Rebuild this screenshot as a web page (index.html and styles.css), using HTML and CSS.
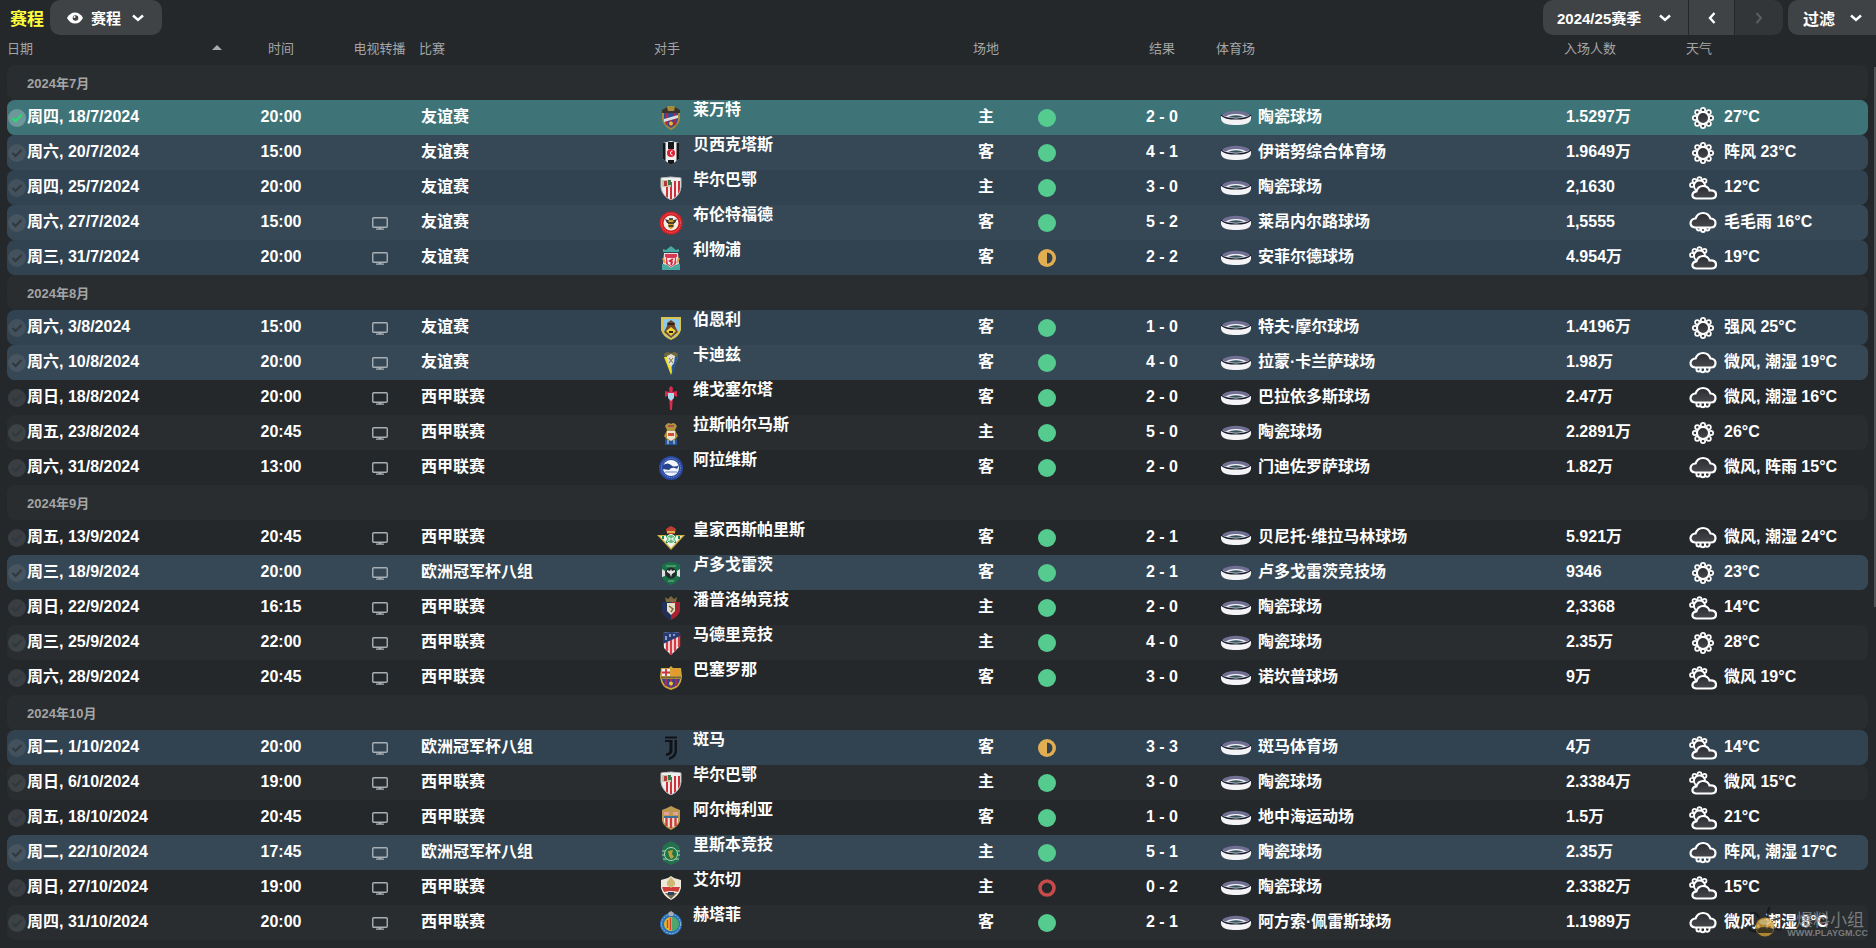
FILE: index.html
```html
<!DOCTYPE html>
<html lang="zh-CN">
<head>
<meta charset="utf-8">
<title>赛程</title>
<link rel="stylesheet" href="styles.css">
</head>
<body>
<svg class="sprite" aria-hidden="true">
  <defs>
    <linearGradient id="sky" x1="0" y1="0" x2="0" y2="1"><stop offset="0" stop-color="#2b2d33"/><stop offset="1" stop-color="#46484c"/></linearGradient>
    <clipPath id="shield"><path d="M2 2Q12 0 22 2V11Q21 20 12 24Q3 20 2 11Z"/></clipPath>
  </defs>
  <symbol id="eye" viewBox="0 0 16 12"><path d="M0 6Q3 0.500 8 0.500T16 6Q13 11.500 8 11.500T0 6Z" fill="#fff"/><circle cx="8.500" cy="6" r="2.800" fill="#404244"/><circle cx="7.500" cy="5" r="1" fill="#fff"/></symbol>
  <symbol id="down" viewBox="0 0 12 8"><path d="M1 1.500L6 6L11 1.500" fill="none" stroke="currentColor" stroke-width="2.400"/></symbol>
  <symbol id="left" viewBox="0 0 8 12"><path d="M6.500 1L2 6L6.500 11" fill="none" stroke="currentColor" stroke-width="2.400"/></symbol>
  <symbol id="right" viewBox="0 0 8 12"><path d="M1.500 1L6 6L1.500 11" fill="none" stroke="currentColor" stroke-width="2"/></symbol>
  <symbol id="check" viewBox="0 0 18 18"><circle cx="9" cy="9" r="9" fill="currentColor" opacity="0.300"/><path class="tick" d="M4.500 9L7.500 12L13.500 6" fill="none" stroke-width="2"/></symbol>
  <symbol id="tv" viewBox="0 0 16 13"><rect x="0.750" y="0.750" width="14.500" height="9.500" rx="1" fill="none" stroke="#a9b0b5" stroke-width="1.400"/><path d="M6.500 10.500H9.500V11.500H12V12.800H4V11.500H6.500Z" fill="#a9b0b5"/></symbol>
  <symbol id="win" viewBox="0 0 18 18"><circle cx="9" cy="9" r="9" fill="#56cb90"/></symbol>
  <symbol id="draw" viewBox="0 0 18 18"><circle cx="9" cy="9" r="9" fill="#e2ae52"/><path d="M9 3.500A5.500 5.500 0 0 1 9 14.500Z" fill="#314150"/></symbol>
  <symbol id="loss" viewBox="0 0 18 18"><circle cx="9" cy="9" r="7" fill="none" stroke="#c64b4b" stroke-width="3.600"/></symbol>
  <symbol id="stadium" viewBox="0 0 32 16"><ellipse cx="16" cy="7" rx="14.500" ry="6.300" fill="#716f94"/><path d="M1 5Q16 11 31 5V9C30 14.500 23 15 16 15S2 14.500 1 9Z" fill="#f4f3f6"/><path d="M6 7C7 3 25 3 26 7Q16 9.500 6 7Z" fill="#eeeef3"/><path d="M8 7Q16 3.500 24 7Q16 8.500 8 7Z" fill="#34525c"/><path d="M1 5Q5 9 16 9T31 5" fill="none" stroke="#171a2b" stroke-width="1.200"/></symbol>
  <symbol id="sun" viewBox="0 0 28 24"><g fill="#3a3b3e" stroke="#fff" stroke-width="1.700"><circle cx="14" cy="4" r="2.200"/><circle cx="19.700" cy="6.300" r="2.200"/><circle cx="22" cy="12" r="2.200"/><circle cx="19.700" cy="17.700" r="2.200"/><circle cx="14" cy="20" r="2.200"/><circle cx="8.300" cy="17.700" r="2.200"/><circle cx="6" cy="12" r="2.200"/><circle cx="8.300" cy="6.300" r="2.200"/></g><circle cx="14" cy="12" r="6" fill="url(#sky)" stroke="#fff" stroke-width="2"/></symbol>
  <symbol id="cloud" viewBox="0 0 28 24"><g fill="#3a3b3e" stroke="#fff" stroke-width="1.700"><circle cx="10.500" cy="3.200" r="2"/><circle cx="15.500" cy="4.800" r="2"/><circle cx="5.500" cy="4.800" r="2"/><circle cx="3" cy="9" r="2"/></g><circle cx="10.500" cy="10" r="5.500" fill="url(#sky)" stroke="#fff" stroke-width="1.800"/><path d="M7 22.500Q3 22 3.500 18.500Q4 15.500 7.500 15.300Q9 10 14 10Q19 10 20.500 14.500Q27 14 27 18.500Q27 22.500 22.500 22.500Z" fill="url(#sky)" stroke="#fff" stroke-width="2.200"/></symbol>
  <symbol id="rain" viewBox="0 0 28 24"><path d="M7.500 15V18.500A2 2 0 0 0 11.500 18.500V15M11.500 17V19.500A2.300 2.300 0 0 0 16 19.500V15M16 17V18.500A2 2 0 0 0 20.500 18.500V15" fill="none" stroke="#fff" stroke-width="2"/><path d="M6 16.500Q1.500 16 1.500 12Q2 8 6.500 7.500Q8.500 2 14 2Q19.500 2 21.500 7.500Q26.500 8 26.500 12Q26.500 16.500 22 16.500Z" fill="url(#sky)" stroke="#fff" stroke-width="2.200"/></symbol>
  <symbol id="drizzle" viewBox="0 0 28 24"><g fill="none" stroke="#fff" stroke-width="1.800"><circle cx="9.500" cy="17.500" r="2"/><circle cx="14" cy="19" r="2"/><circle cx="18.500" cy="17.500" r="2"/></g><path d="M6 16.500Q1.500 16 1.500 12Q2 8 6.500 7.500Q8.500 2 14 2Q19.500 2 21.500 7.500Q26.500 8 26.500 12Q26.500 16.500 22 16.500Z" fill="url(#sky)" stroke="#fff" stroke-width="2.200"/></symbol>

  <symbol id="levante" viewBox="0 0 24 24"><path d="M3 4L7 2L9 0H15L17 2L21 4V13Q20 20 12 24Q4 20 3 13Z" fill="#a58b3a"/><path d="M5 6H19V13Q18 19 12 22Q6 19 5 13Z" fill="#24509b"/><path d="M8 7V19M12 13V21M16 7V19" stroke="#b32746" stroke-width="2.400"/><path d="M3 4L8 1L9 5H15L16 1L21 4V7H3Z" fill="#39342b"/><path d="M5 13L19 9V12L5 16Z" fill="#ddd"/><circle cx="12" cy="17.500" r="2" fill="#e6bd31"/></symbol>
  <symbol id="besiktas" viewBox="0 0 24 24"><path d="M4 2L12 0L20 2V18L12 24L4 18Z" fill="#efefef"/><path d="M4 2H6.500V20L4 18ZM9 1H15V8H9ZM17.500 2H20V18L17.500 20ZM9 19H15V22L12 24L9 22Z" fill="#16171a"/><circle cx="12" cy="12" r="4" fill="#df2035"/><path d="M13.500 10A2 2 0 1 0 13.500 14" stroke="#fff" fill="none"/></symbol>
  <symbol id="bilbao" viewBox="0 0 24 24"><g clip-path="url(#shield)"><path d="M0 0H24V24H0Z" fill="#ececec"/><path d="M8 10V24M12 6V24M16 5V22M20 5V19" stroke="#cf3038" stroke-width="2"/><path d="M3 4H12V11H3Z" fill="#c9c3ac"/><path d="M5 5H8V10H5Z" fill="#b33b3b"/><path d="M9 4H12V9H9Z" fill="#37774c"/></g><path d="M2 2Q12 0 22 2V11Q21 20 12 24Q3 20 2 11Z" fill="none" stroke="#bbb"/><path d="M3 3H21" stroke="#eee" stroke-width="2"/></symbol>
  <symbol id="brentford" viewBox="0 0 24 24"><circle cx="12" cy="12" r="11.500" fill="#d22027"/><circle cx="12" cy="12" r="9.500" fill="none" stroke="#ed777b" stroke-dasharray="1 1"/><circle cx="12" cy="12" r="7.500" fill="#f3eee5"/><path d="M6 8L12 10L18 8L16 12L12 13L8 12Z" fill="#343536"/><ellipse cx="12" cy="13" rx="3" ry="5" fill="#d49b24"/><path d="M9 12H15M9.500 15H14.500M10 8H14" stroke="#252627" stroke-width="1.600"/></symbol>
  <symbol id="liverpool" viewBox="0 0 24 24"><path d="M7 4L12 0L17 4L20 3V6H4V3Z" fill="#47a99f"/><path d="M5 7H19L20 18L12 22L4 18Z" fill="#e6dcdc"/><path d="M6 8H18V11H6ZM7 11H17V18L12 21L7 18Z" fill="#d63950"/><path d="M8 12H16L15 18L12 20L9 18Z" fill="#f3eceb"/><path d="M3 18L8 19L12 22L16 19L21 18V24H3Z" fill="#47a99f"/><path d="M4 12L6 17M20 12L18 17" stroke="#e69c4d" stroke-width="2"/><path d="M14 13L11 15L13 16L12 19" stroke="#cf2b40" stroke-width="2" fill="none"/></symbol>
  <symbol id="burnley" viewBox="0 0 24 24"><path d="M2 1H22V14Q20 21 12 24Q4 21 2 14Z" fill="#dcc44a"/><path d="M4 3H20V14Q18 19 12 22Q6 19 4 14Z" fill="#8accef"/><path d="M8 7L12 4L16 7V10L19 16L12 22L5 16L8 10Z" fill="#724727"/><path d="M7 15L12 11L17 15L12 20Z" fill="#eed13b"/><path d="M9 8H15M10 16H14" stroke="#262321" stroke-width="2"/></symbol>
  <symbol id="cadiz" viewBox="0 0 24 24"><path d="M5 3L8 1L12 2L16 1L19 3L18 7H6Z" fill="#70683d"/><path d="M5 6H19L12 24Z" fill="#f1dd2d"/><path d="M12 6H19L13 23Z" fill="#225698"/><path d="M8 5L12 3L16 5L15 12L12 16L9 12Z" fill="#e1e0d0"/><path d="M10 7L14 12M14 7L10 12" stroke="#79723d"/></symbol>
  <symbol id="celta" viewBox="0 0 24 24"><path d="M10.500 6L10 2L12 0L14 2L13.500 6L18 5V11L14 9L13 24H11L10 9L6 11V5Z" fill="#d92b4c"/><path d="M9 7H15V12L12 15L9 12Z" fill="#a9d8ed"/></symbol>
  <symbol id="palmas" viewBox="0 0 24 24"><path d="M6 5Q9 0 12 3Q15 0 18 5L16 9L19 15L15 20H9L5 15L8 9Z" fill="#ad963e"/><path d="M9 5H15" stroke="#b74c42" stroke-width="2"/><path d="M8 10H16V17L12 20L8 17Z" fill="#ece3d0"/><path d="M9 12H15V15H9Z" fill="#cb5031"/><path d="M6 18L12 20L18 18V24H6Z" fill="#2456a0"/><path d="M9 19V23M15 19V23" stroke="#e9e5da"/></symbol>
  <symbol id="alaves" viewBox="0 0 24 24"><circle cx="12" cy="12" r="12" fill="#2949a2"/><circle cx="12" cy="12" r="9.500" fill="none" stroke="#859ed3" stroke-dasharray="1 1"/><circle cx="12" cy="12" r="8" fill="#f4f5f9"/><path d="M4 9Q9 6 12 9T20 9L18 13Q13 10 10 14L4 13Z" fill="#27458e"/><path d="M6 16H18" stroke="#6685c6"/></symbol>
  <symbol id="betis" viewBox="0 0 28 24"><path d="M9 3L12 1L14 0L16 1L19 3L18 8H10Z" fill="#bf3d32"/><path d="M10 6H18" stroke="#d9b347" stroke-width="2"/><path d="M0 9H28L14 24Z" fill="#d1ae49"/><path d="M3 10H25L14 22Z" fill="#f1f2e8"/><path d="M6 10V13M10 9V17M18 9V17M22 10V13" stroke="#168b4a" stroke-width="2"/><circle cx="14" cy="13" r="4.500" fill="#5fba79" stroke="#fff"/><path d="M12 11V15M16 11V15M12 13H16" stroke="#fff"/></symbol>
  <symbol id="ludogorets" viewBox="0 0 24 24"><path d="M3 4Q12 -2 21 4V16Q19 21 12 24Q5 21 3 16Z" fill="#187247"/><path d="M3 8L6 10V15L3 16ZM21 8L18 10V15L21 16Z" fill="#ddd"/><circle cx="12" cy="12" r="5.500" fill="#202a2b"/><path d="M8 9L11 10L12 8L13 10L16 9V11L13 13L12 16L11 13L8 11Z" fill="#e4e5df"/><path d="M9 20H15M7 5H17" stroke="#8ab28e"/></symbol>
  <symbol id="osasuna" viewBox="0 0 24 24"><path d="M6 1L9 3L12 0L15 3L18 1L17 6H7Z" fill="#7b6940"/><path d="M3 6H21V15Q19 21 12 24Q5 21 3 15Z" fill="#a62132"/><path d="M3 6H12V24Q5 21 3 15Z" fill="#1f315b"/><path d="M8 7H16V15L12 19L8 15Z" fill="#e6dfc4"/><path d="M10 10L14 13L12 16" fill="none" stroke="#7c6a44" stroke-width="1.500"/></symbol>
  <symbol id="atletico" viewBox="0 0 24 24"><path d="M4 2Q12 0 21 2V15L12 24L5 17Z" fill="#f3f3f3"/><path d="M8 11V20M12 7V24M16 5V20M20 3V16" stroke="#d53b43" stroke-width="2.400"/><path d="M4 2Q12 0 21 2V5L4 13Z" fill="#263b76"/><path d="M7 5V9M11 3V6M15 3V5" stroke="#fff"/></symbol>
  <symbol id="barcelona" viewBox="0 0 24 24"><path d="M2 2H10L12 0L14 2H22L23 11Q22 22 12 24Q2 22 1 11Z" fill="#d3a737"/><path d="M3 3H11V10H3Z" fill="#eee"/><path d="M7 3V10M3 6.500H11" stroke="#cd3238" stroke-width="1.800"/><path d="M13 3H21V10H13Z" fill="#e39a31"/><path d="M3 13H21Q20 20 12 22Q4 20 3 13Z" fill="#2e4590"/><path d="M7 13V20M12 13V22M17 13V20" stroke="#a32f58" stroke-width="2.500"/><path d="M2 11.500H22" stroke="#746638" stroke-width="2"/><circle cx="12" cy="17.500" r="2" fill="#e7c63c"/></symbol>
  <symbol id="juve" viewBox="0 0 24 24"><path d="M6 1.500H18M6 5H13" stroke="#101318" stroke-width="1.800"/><path d="M18 4V16Q17 22 10 24V21.500Q15.500 19 15.500 15V4ZM13.500 4V16Q12 19.500 7 20V17.500Q10.500 17 10.500 14V4Z" fill="#101318"/></symbol>
  <symbol id="almeria" viewBox="0 0 24 24"><path d="M3 4L8 2L12 0L16 2L21 4V15Q19 21 12 24Q5 21 3 15Z" fill="#bc9850"/><path d="M5 12H19V16Q17 20 12 22Q7 20 5 16Z" fill="#efe6db"/><path d="M7.500 12V20M12 12V22M16.500 12V20" stroke="#cd3b36" stroke-width="2.400"/><path d="M5 6H10V9H5ZM14 6H19V9H14Z" fill="#e5a19b"/><path d="M5 10H19V12H5Z" fill="#3c719c"/></symbol>
  <symbol id="sporting" viewBox="0 0 24 24"><path d="M8 2L12 0L16 2L20 5L21 12L20 20L12 24L4 20L3 12L4 5Z" fill="#24724d"/><path d="M3 10H21M3 14H21M4 18H20" stroke="#a8cfb9"/><circle cx="12" cy="13" r="6.500" fill="#197746" stroke="#b6d6c5"/><path d="M9 10L14 9L13 13L15 16L12 18L10 15Z" fill="#bf9f39"/></symbol>
  <symbol id="elche" viewBox="0 0 24 24"><path d="M2 4L9 2L12 0L15 2L22 4V12Q20 20 12 24Q4 20 2 12Z" fill="#eee9d8"/><path d="M3 11H21L19 16Q12 14 5 16Z" fill="#cf3b38"/><path d="M8 6L12 1L16 6V9L12 12L8 9Z" fill="#cdb974"/><path d="M6 17H18L12 23Z" fill="#6e6748"/><path d="M9 16H15V19H9Z" fill="#314165"/></symbol>
  <symbol id="getafe" viewBox="0 0 24 24"><circle cx="12" cy="13" r="11" fill="#2971b6"/><circle cx="12" cy="13" r="9.500" fill="none" stroke="#8fc2e8" stroke-dasharray="2 1"/><circle cx="12" cy="13" r="7" fill="#e5b22c"/><path d="M13 6A7 7 0 0 1 13 20Z" fill="#4fa66b"/><path d="M8.500 9V17M11.500 7V19" stroke="#cf4037" stroke-width="1.400"/><path d="M9 2L12 0L15 2L14 5H10Z" fill="#a9acb2"/></symbol>
  <symbol id="bee" viewBox="0 0 40 32"><path d="M12 12Q10 5 3 8M21 11Q20 5 23 1" fill="none" stroke="#15171a" stroke-width="2"/><path d="M8 20Q1 19 3 24L9 26M26 14L33 12M27 22L34 24" fill="none" stroke="#15171a" stroke-width="2"/><circle cx="18" cy="21" r="9.500" fill="#d09b35"/><ellipse cx="18" cy="16" rx="6" ry="3" fill="#edcf82"/><path d="M9 23Q18 19 27 23L25 27H11Z" fill="#403820"/></symbol>
</svg>

<div class="app">
  <header class="toolbar">
    <h1 class="title">赛程</h1>
    <button class="pill view" type="button"><svg class="eye"><use href="#eye"/></svg><span>赛程</span><svg class="chev"><use href="#down"/></svg></button>
    <div class="season">
      <button class="seg seg-season" type="button"><span>2024/25赛季</span><svg class="chev"><use href="#down"/></svg></button>
      <button class="seg seg-step" type="button" aria-label="上一赛季"><svg class="arrow"><use href="#left"/></svg></button>
      <button class="seg seg-step" type="button" aria-label="下一赛季" disabled><svg class="arrow"><use href="#right"/></svg></button>
    </div>
    <button class="pill filter" type="button"><span>过滤</span><svg class="chev"><use href="#down"/></svg></button>
  </header>
  <main class="content">
    <table class="fixtures">
      <colgroup>
        <col class="c-date"><col class="c-time"><col class="c-tv"><col class="c-comp"><col class="c-opp">
        <col class="c-venue"><col class="c-form"><col class="c-result"><col class="c-stadium"><col class="c-att"><col class="c-weather">
      </colgroup>
      <thead>
        <tr>
          <th scope="col"><div class="sort"><span>日期</span><span class="sort-mark"></span></div></th>
          <th scope="col" class="mid">时间</th>
          <th scope="col" class="mid screen">电视转播</th>
          <th scope="col">比赛</th>
          <th scope="col">对手</th>
          <th scope="col" class="mid">场地</th>
          <th></th>
          <th scope="col" class="mid">结果</th>
          <th scope="col" class="inset">体育场</th>
          <th scope="col" class="inset">入场人数</th>
          <th scope="col" class="inset">天气</th>
        </tr>
      </thead>
      <tbody id="rows"></tbody>
    </table>
  </main>
  <div class="scrollbar"></div>
  <div class="watermark"><svg class="bee"><use href="#bee"/></svg><div class="mark-text"><span class="mark-name">爆料小组</span><span class="mark-url">WWW.PLAYGM.CC</span></div></div>
</div>
<script src="app.js"></script>
</body>
</html>
```
FILE: styles.css
```css
* { box-sizing: border-box; }
body {
  margin: 0;
  background: #24282b;
  color: #fff;
  font-family: "Liberation Sans", "Noto Sans CJK SC", sans-serif;
  font-size: 16px;
  font-weight: 700;
}
.sprite { position: absolute; width: 0; height: 0; }
.app { position: relative; height: 100vh; overflow: hidden; }
.toolbar { display: flex; align-items: flex-start; height: 35px; padding-left: 10px; }
.title { margin: 8px 6px 0 0; font-size: 17px; line-height: 24px; color: #ffff3d; }
button { border: 0; color: #fff; font: inherit; height: 35px; background: #404345; display: flex; align-items: center; }
.pill { border-radius: 10px; }
.view { padding: 0 18px 0 17px; gap: 8px; font-size: 15px; }
.view .chev { margin-left: 3px; }
.eye { width: 16px; height: 12px; }
.chev { width: 12px; height: 8px; }
.arrow { width: 8px; height: 12px; }
.season { display: flex; gap: 1px; margin-left: auto; margin-right: 5px; border-radius: 10px; overflow: hidden; }
.seg-season { width: 145px; padding: 0 17px 0 14px; justify-content: space-between; font-size: 15px; }
.seg-step { width: 45px; justify-content: center; }
.seg-step + .seg-step { width: 48px; }
.seg:disabled { background: #323638; color: #5b5e60; }
.filter { width: 88px; padding: 0 14px 0 15px; justify-content: space-between; border-radius: 10px 0 0 10px; }

.content { padding: 0 8px 0 7px; }
.fixtures { width: 100%; table-layout: fixed; border-collapse: separate; border-spacing: 0; }
.c-date { width: 218px; }
.c-time { width: 112px; }
.c-tv { width: 82px; }
.c-comp { width: 235px; }
.c-venue { width: 52px; }
.c-form { width: 98px; }
.c-result { width: 104px; }
.c-stadium { width: 348px; }
.c-att { width: 122px; }
.c-weather { width: 184px; }
th { height: 30px; padding: 0 0 6px; text-align: left; font-size: 13px; font-weight: 400; color: #a3a5a6; white-space: nowrap; }
td { height: 35px; padding: 0; white-space: nowrap; }
.mid { text-align: center; }
.screen { padding-left: 3px; }
.inset { padding-left: 2px; }
.sort { display: flex; align-items: center; justify-content: space-between; padding-right: 3px; }
.sort-mark { border: 5px solid transparent; border-top: 0; border-bottom-color: #a9abac; }

.cup { background: #314351; }
.alt td { background: #292d2f; }
.cup.alt td { background: #364855; }
.selected td, .cup.selected td { background: #3e7478; }
td:first-child { border-radius: 8px 0 0 8px; }
td:last-child { border-radius: 0 8px 8px 0; }
.group td:first-child { padding-left: 20px; border-radius: 8px; font-size: 13px; color: #a3a5a6; }
.cell { display: flex; align-items: center; }
.cell span, .txt { line-height: 24px; }
.txt, .cell span { padding-bottom: 2px; }
.date { gap: 1px; }
.check { width: 18px; height: 18px; margin-left: 1px; color: #6d7579; --tick: #30383d; }
.selected .check { color: #dfe8e8; --tick: #20e070; }
.tick { stroke: var(--tick); }
.tv { width: 16px; height: 13px; vertical-align: middle; }
.comp { padding-left: 2px; }
.opp { height: 35px; gap: 8px; padding-left: 3px; }
.crest { width: 28px; height: 24px; }
.cell .name { align-self: flex-start; line-height: 20px; }
.form { width: 18px; height: 18px; margin-left: 26px; display: block; }
.place { gap: 6px; padding-left: 6px; }
.stadium { width: 32px; height: 16px; }
.att { padding-left: 4px; }
.sky { gap: 7px; padding-left: 5px; }
.weather { width: 28px; height: 24px; }

.scrollbar { position: absolute; right: 0; top: 67px; width: 2px; height: 540px; background: #505355; }
.watermark { position: absolute; right: 8px; bottom: 10px; display: flex; align-items: flex-end; color: #8d8f90; opacity: 0.8; }
.bee { width: 40px; height: 32px; }
.mark-text { display: flex; flex-direction: column; align-items: flex-end; }
.mark-name { font-family: "Noto Sans CJK SC", sans-serif; font-size: 17px; line-height: 20px; font-weight: 400; padding-right: 4px; }
.mark-url { font-size: 9px; line-height: 9px; }
```
FILE: app.js
```javascript
const months = [
  ["2024年7月", [
    ["周四, 18/7/2024", "20:00", 0, "友谊赛", "levante", "莱万特", "主", "win", "2 - 0", "陶瓷球场", "1.5297万", "sun", "27°C"],
    ["周六, 20/7/2024", "15:00", 0, "友谊赛", "besiktas", "贝西克塔斯", "客", "win", "4 - 1", "伊诺努综合体育场", "1.9649万", "sun", "阵风 23°C"],
    ["周四, 25/7/2024", "20:00", 0, "友谊赛", "bilbao", "毕尔巴鄂", "主", "win", "3 - 0", "陶瓷球场", "2,1630", "cloud", "12°C"],
    ["周六, 27/7/2024", "15:00", 1, "友谊赛", "brentford", "布伦特福德", "客", "win", "5 - 2", "莱昂内尔路球场", "1,5555", "drizzle", "毛毛雨 16°C"],
    ["周三, 31/7/2024", "20:00", 1, "友谊赛", "liverpool", "利物浦", "客", "draw", "2 - 2", "安菲尔德球场", "4.954万", "cloud", "19°C"]
  ]],
  ["2024年8月", [
    ["周六, 3/8/2024", "15:00", 1, "友谊赛", "burnley", "伯恩利", "客", "win", "1 - 0", "特夫·摩尔球场", "1.4196万", "sun", "强风 25°C"],
    ["周六, 10/8/2024", "20:00", 1, "友谊赛", "cadiz", "卡迪兹", "客", "win", "4 - 0", "拉蒙·卡兰萨球场", "1.98万", "rain", "微风, 潮湿 19°C"],
    ["周日, 18/8/2024", "20:00", 1, "西甲联赛", "celta", "维戈塞尔塔", "客", "win", "2 - 0", "巴拉依多斯球场", "2.47万", "rain", "微风, 潮湿 16°C"],
    ["周五, 23/8/2024", "20:45", 1, "西甲联赛", "palmas", "拉斯帕尔马斯", "主", "win", "5 - 0", "陶瓷球场", "2.2891万", "sun", "26°C"],
    ["周六, 31/8/2024", "13:00", 1, "西甲联赛", "alaves", "阿拉维斯", "客", "win", "2 - 0", "门迪佐罗萨球场", "1.82万", "rain", "微风, 阵雨 15°C"]
  ]],
  ["2024年9月", [
    ["周五, 13/9/2024", "20:45", 1, "西甲联赛", "betis", "皇家西斯帕里斯", "客", "win", "2 - 1", "贝尼托·维拉马林球场", "5.921万", "rain", "微风, 潮湿 24°C"],
    ["周三, 18/9/2024", "20:00", 1, "欧洲冠军杯八组", "ludogorets", "卢多戈雷茨", "客", "win", "2 - 1", "卢多戈雷茨竞技场", "9346", "sun", "23°C"],
    ["周日, 22/9/2024", "16:15", 1, "西甲联赛", "osasuna", "潘普洛纳竞技", "主", "win", "2 - 0", "陶瓷球场", "2,3368", "cloud", "14°C"],
    ["周三, 25/9/2024", "22:00", 1, "西甲联赛", "atletico", "马德里竞技", "主", "win", "4 - 0", "陶瓷球场", "2.35万", "sun", "28°C"],
    ["周六, 28/9/2024", "20:45", 1, "西甲联赛", "barcelona", "巴塞罗那", "客", "win", "3 - 0", "诺坎普球场", "9万", "cloud", "微风 19°C"]
  ]],
  ["2024年10月", [
    ["周二, 1/10/2024", "20:00", 1, "欧洲冠军杯八组", "juve", "斑马", "客", "draw", "3 - 3", "斑马体育场", "4万", "cloud", "14°C"],
    ["周日, 6/10/2024", "19:00", 1, "西甲联赛", "bilbao", "毕尔巴鄂", "主", "win", "3 - 0", "陶瓷球场", "2.3384万", "cloud", "微风 15°C"],
    ["周五, 18/10/2024", "20:45", 1, "西甲联赛", "almeria", "阿尔梅利亚", "客", "win", "1 - 0", "地中海运动场", "1.5万", "cloud", "21°C"],
    ["周二, 22/10/2024", "17:45", 1, "欧洲冠军杯八组", "sporting", "里斯本竞技", "主", "win", "5 - 1", "陶瓷球场", "2.35万", "rain", "阵风, 潮湿 17°C"],
    ["周日, 27/10/2024", "19:00", 1, "西甲联赛", "elche", "艾尔切", "主", "loss", "0 - 2", "陶瓷球场", "2.3382万", "cloud", "15°C"],
    ["周四, 31/10/2024", "20:00", 1, "西甲联赛", "getafe", "赫塔菲", "客", "win", "2 - 1", "阿方索·佩雷斯球场", "1.1989万", "rain", "微风, 潮湿 8°C"]
  ]]
];

const icon = (cls, id) => `<svg class="${cls}" aria-hidden="true"><use href="#${id}"/></svg>`;
let index = 0;
let html = "";
for (const [month, games] of months) {
  html += `<tr class="group ${index++ % 2 ? "" : "alt"}"><td colspan="11">${month}</td></tr>`;
  for (const [date, time, tv, comp, crest, name, venue, form, result, stadium, att, sky, weather] of games) {
    const classes = [index % 2 ? "" : "alt", comp === "西甲联赛" ? "" : "cup", index === 1 ? "selected" : ""];
    index++;
    html += `<tr class="${classes.join(" ").trim()}">
      <td><div class="cell date">${icon("check", "check")}<span>${date}</span></div></td>
      <td class="mid txt">${time}</td>
      <td class="mid screen">${tv ? icon("tv", "tv") : ""}</td>
      <td class="comp txt">${comp}</td>
      <td><div class="cell opp">${icon("crest", crest)}<span class="name">${name}</span></div></td>
      <td class="mid txt">${venue}</td>
      <td>${icon("form", form)}</td>
      <td class="mid txt">${result}</td>
      <td><div class="cell place">${icon("stadium", "stadium")}<span>${stadium}</span></div></td>
      <td class="att txt">${att}</td>
      <td><div class="cell sky">${icon("weather", sky)}<span>${weather}</span></div></td>
    </tr>`;
  }
}
document.getElementById("rows").innerHTML = html;
```
